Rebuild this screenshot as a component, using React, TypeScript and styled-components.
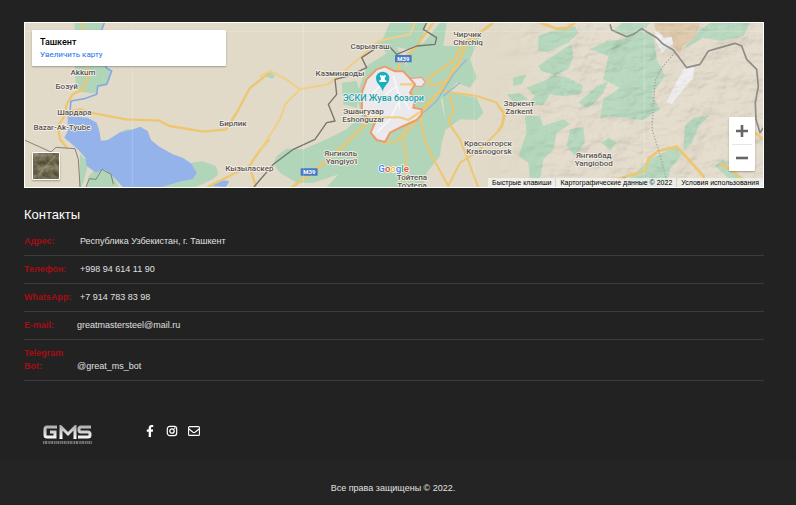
import React from "react";
import styled, { createGlobalStyle } from "styled-components";
import { FaFacebookF } from "react-icons/fa";

const GlobalStyle = createGlobalStyle`
  *, *::before, *::after { box-sizing: border-box; }
  html { background: #222222; }
  body {
    margin: 0;
    background: #222222;
    color: #e0e0e0;
    font: 9px/13px "Liberation Sans", Arial, sans-serif;
  }
`;

const Page = styled.div`
  min-height: 100vh;
  display: flex;
  flex-direction: column;
`;

const Main = styled.main`
  padding: 22px 32px 0 24px;
`;

const MapFrame = styled.section`
  position: relative;
  height: 166px;
  border: 1px solid #ffffff;
  overflow: hidden;
  background: #e2dac8;
  font-family: Roboto, "Liberation Sans", sans-serif;
`;

const MapCanvas = styled.svg`
  position: absolute;
  inset: 0;
  width: 100%;
  height: 100%;
`;

const PlaceCard = styled.div`
  position: absolute;
  top: 7px;
  left: 7px;
  width: 194px;
  padding: 6px 8px 5px;
  background: #ffffff;
  border-radius: 1px;
  box-shadow: 0 1px 2px rgba(0, 0, 0, 0.3);
`;

const PlaceName = styled.div`
  color: #000000;
  font-size: 9px;
  font-weight: 500;
  line-height: 13px;
`;

const PlaceLink = styled.a`
  display: block;
  color: #1a73e8;
  font-size: 8px;
  line-height: 12px;
  text-decoration: none;
`;

const Satellite = styled.button`
  position: absolute;
  left: 7px;
  bottom: 7px;
  width: 28px;
  height: 28px;
  padding: 0;
  border: 1px solid #ffffff;
  border-radius: 1px;
  overflow: hidden;
  box-shadow: 0 1px 2px rgba(0, 0, 0, 0.3);

  svg { display: block; width: 100%; height: 100%; }
`;

const ZoomPanel = styled.div`
  position: absolute;
  right: 8px;
  bottom: 16px;
  width: 26px;
  padding: 0 3px;
  background: #ffffff;
  border-radius: 1px;
  box-shadow: 0 1px 2px rgba(0, 0, 0, 0.3);
`;

const ZoomButton = styled.button`
  display: flex;
  align-items: center;
  justify-content: center;
  width: 100%;
  height: 27px;
  padding: 0;
  border: 0;
  background: none;

  & + & { border-top: 1px solid #e6e6e6; }
`;

const MapTerms = styled.div`
  position: absolute;
  right: 0;
  bottom: 0;
  display: flex;
  background: rgba(245, 245, 245, 0.7);
  color: #000000;
  font: 7px/9px "Liberation Sans", Arial, sans-serif;
  white-space: nowrap;
`;

const termText = `
  padding: 0 4px;
  color: inherit;
  font: inherit;
  text-decoration: none;
`;

const TermButton = styled.button`
  ${termText}
  border: 0;
  background: none;
`;

const TermLabel = styled.span`
  ${termText}
  border-left: 1px solid #d5d0c5;
`;

const TermLink = styled.a`
  ${termText}
  border-left: 1px solid #d5d0c5;
`;

const Heading = styled.h2`
  margin: 17px 0 8px;
  color: #ffffff;
  font: 400 13px/20px "Liberation Sans", Arial, sans-serif;
`;

const ContactList = styled.dl`
  margin: 0;
`;

const ContactRow = styled.div`
  display: grid;
  grid-template-columns: 53px 1fr;
  align-items: end;
  padding: 7px 0;
  border-bottom: 1px solid #3b3b3b;

  &:first-child { padding-top: 2px; }
`;

const ContactLabel = styled.dt`
  color: #a50d14;
  font-weight: 700;
`;

const ContactValue = styled.dd<{ $inset?: boolean }>`
  margin: 0;
  padding-left: ${(p) => (p.$inset ? "3px" : "0")};
`;

const FooterTop = styled.div`
  display: flex;
  align-items: flex-start;
  gap: 51px;
  padding: 44px 43px 14px;
`;

const LogoLink = styled.a`
  display: block;
  svg { display: block; }
`;

const Socials = styled.nav`
  display: flex;
  gap: 8px;
`;

const SocialLink = styled.a`
  display: flex;
  justify-content: center;
  width: 14px;
  color: #ffffff;
`;

const Copyright = styled.div`
  flex: 1;
  padding: 22px 10px 10px 0;
  background: #242424;
  text-align: center;
`;

type Point = [number, number, string];

const westGreens = [
  "M176 18H262L252 55 270 100 272 155 287 165 272 205 245 215 240 232 190 228 178 200Z",
  "M192 415 208 430 215 450 202 500 195 513H190Z",
  "M210 513 218 480 240 458 265 460 290 480 310 513Z",
  "M525 440 560 436 600 450 607 475 590 490 540 513H440L490 497 530 490 543 470Z",
  "M308 350 330 340 352 340 315 355Z",
];

const cityGreens = [
  "M390 18H500L480 95 440 100 410 92 380 110 350 85 370 65Z",
  "M440 110 480 90 500 70 540 20H560L550 90 600 90 640 60H660L630 130 650 185 630 215 590 200 550 245 500 270 480 180 440 150Z",
  "M545 225 650 245 670 290 650 312 600 310 560 340Z",
  "M320 150 410 92 440 150 480 180 500 250 540 240 560 330 545 380 540 420 500 470 490 513H200L240 470 190 455 200 400 270 330 305 300 290 240Z",
  "M245 200 290 195 300 230 290 275 250 265Z",
  "M50 420 80 398 130 400 200 370 280 330 320 350 300 430 250 470 160 500 110 500 60 470 40 445Z",
  "M15 180 30 165 45 182 35 188Z",
];

const mountainGreens = [
  "M115 60 160 45 225 30 235 50 205 80 145 108 115 105Z",
  "M115 150 150 125 215 83 220 125 205 160 165 178 125 165Z",
  "M80 215 130 195 165 178 205 185 250 210 240 235 190 240 150 235 130 268 85 265 105 240Z",
  "M270 100 320 75 370 70 420 45 460 55 470 130 495 180 470 215 455 235 480 280 430 312 330 300 300 310 310 250 360 215 310 190 325 120Z",
  "M235 260 290 210 325 195 310 230 280 265 260 275Z",
  "M40 185 80 175 65 205 40 210Z",
  "M20 235 60 232 85 250 40 258Z",
  "M75 300 120 300 130 330 190 310 210 325 170 350 160 400 130 430 120 490H90L85 440 55 420 80 350Z",
  "M210 340 250 332 255 380 225 420 200 390Z",
  "M305 380 325 365 350 380 330 402Z",
  "M550 100 590 50 630 20H750L730 60 660 75 610 65Z",
  "M555 330 580 305 630 298 600 325 575 380 550 405Z",
  "M385 490 450 430 530 390 550 410 510 460 500 513H380Z",
  "M645 450 670 430 690 460 740 490 700 500Z",
  "M365 20H450L420 55 380 62 340 45Z",
];

const westLabels: Point[] = [
  [201, 178, "Akkum"],
  [152, 218, "Бозуй"],
  [175, 298, "Шардара"],
  [138, 341, "Bazar-Ak-Tyube"],
  [651, 331, "Бирлик"],
  [700, 465, "Кызыласкер"],
];

const cityLabels: Point[] = [
  [330, 99, "Сарыагаш"],
  [622, 63, "Чирчик"],
  [624, 87, "Chirchiq"],
  [240, 181, "Казминводы"],
  [310, 293, "Эшангузар"],
  [310, 317, "Eshonguzar"],
  [242, 420, "Янгиюль"],
  [244, 443, "Yangiyo'l"],
  [684, 390, "Красногорск"],
  [687, 413, "Krasnogorsk"],
  [456, 493, "Тойтепа"],
  [456, 515, "To'ytepa"],
];

const eastLabels: Point[] = [
  [57, 270, "Заркент"],
  [57, 294, "Zarkent"],
  [281, 427, "Янгиабад"],
  [281, 450, "Yangiobod"],
];

const MapLabel = styled.text`
  fill: #555555;
  stroke: #f6f1e7;
  stroke-width: 5px;
  stroke-linejoin: round;
  paint-order: stroke;
  font: 500 24px Roboto, "Liberation Sans", sans-serif;
  text-anchor: middle;
`;

const MarketLabel = styled(MapLabel)`
  fill: #18a1b3;
  font-size: 27px;
`;

const RoadLabel = styled.text`
  fill: #ffffff;
  font: 700 18px Roboto, sans-serif;
  text-anchor: middle;
`;

const GoogleText = styled.text`
  font: 500 29px Roboto, sans-serif;
  stroke: #ffffff;
  stroke-width: 4px;
  paint-order: stroke;
  text-anchor: middle;
`;

const Labels = ({ items }: { items: Point[] }) => (
  <>
    {items.map(([x, y, text]) => (
      <MapLabel key={text} x={x} y={y}>{text}</MapLabel>
    ))}
  </>
);

const MapDrawing = () => (
  <MapCanvas viewBox="75 69 2214 492" preserveAspectRatio="xMidYMid slice" aria-label="Карта Ташкента">
    <defs>
      <filter id="relief" x="0" y="0" width="100%" height="100%">
        <feTurbulence type="fractalNoise" baseFrequency="0.012 0.02" numOctaves="4" seed="8" />
        <feDiffuseLighting surfaceScale="26" lightingColor="#ffffff">
          <feDistantLight azimuth="225" elevation="55" />
        </feDiffuseLighting>
      </filter>
      <linearGradient id="reliefFade">
        <stop offset="0" stopColor="#000" />
        <stop offset="0.3" stopColor="#fff" />
      </linearGradient>
      <mask id="reliefMask">
        <rect x="1450" y="60" width="850" height="510" fill="url(#reliefFade)" />
      </mask>
    </defs>
    <rect x="0" y="0" width="2400" height="600" fill="#e2dac8" />

    <g fill="#b0d5b8">
      <g transform="translate(48 48)">{westGreens.map((d) => <path key={d} d={d} />)}</g>
      <g transform="translate(780 48)">{cityGreens.map((d) => <path key={d} d={d} />)}</g>
      <g transform="translate(1500 48)">{mountainGreens.map((d) => <path key={d} d={d} />)}</g>
    </g>
    <g transform="translate(1500 48)">
      <path d="M460 20H600L585 65 550 90 540 115 500 70 470 50Z" fill="#dcc4a3" />
      <path d="M465 45 480 50 490 65 515 62 520 85 500 95 485 110 468 75Z" fill="#eeeeee" />
      <path d="M550 160 582 150 580 185 550 220 515 265 500 258 520 215Z" fill="#eeeeee" />
    </g>
    <g mask="url(#reliefMask)">
      <rect x="1450" y="60" width="850" height="510" filter="url(#relief)" opacity="0.12" />
    </g>

    <g transform="translate(48 48)" fill="none" strokeLinejoin="round">
      <path d="M155 300 215 305 242 320 250 345 255 374 275 372 310 350 352 340 372 332 395 345 405 372 430 392 470 415 500 425 525 442 543 470 530 490 490 497 440 513H320L290 480 265 460 240 470 212 450 208 425 185 400 165 382 145 365 155 345Z" fill="#94b3ea" />
      <path d="M575 510 610 492 640 495 630 513Z" fill="#94b3ea" />
      <path d="M265 20 252 55 270 100 270 155 287 165 272 205 245 210 242 235 205 248 165 255 162 285" stroke="#86a9e4" strokeWidth="5" />
      <path d="M200 20 210 100 215 180 200 220 170 235 152 265 145 300 126 330 132 370 155 398" stroke="#edc66f" strokeWidth="7" />
      <path d="M150 288 195 280 235 292 330 310 430 314 460 330 565 347 630 340 665 285 700 218 760 170" stroke="#edc66f" strokeWidth="7" />
      <path d="M760 370 730 405 700 450 640 480 575 513M700 450 720 513" stroke="#edc66f" strokeWidth="7" />
      <path d="M25 372 105 408 120 394 177 398 187 430 192 513M210 513 220 488 240 490 258 460 285 475 292 505" stroke="#858078" strokeWidth="3" />
    </g>

    <g transform="translate(780 48)" fill="none" strokeLinejoin="round">
      <path d="M0 182 30 165 75 188 120 220 205 205 300 125 355 75 450 55 465 20" stroke="#f0cf84" strokeWidth="6" />
      <path d="M120 220 75 265 60 310 0 405" stroke="#f0cf84" strokeWidth="6" />
      <path d="M95 515 175 455 250 390 310 330 350 300 440 305 480 290 540 225 595 145 620 80 700 20" stroke="#edc66f" strokeWidth="8" />
      <path d="M370 155 410 175 420 140 470 90 520 20M500 190 580 135 610 80 660 50M500 190 515 210 560 195 590 145" stroke="#edc66f" strokeWidth="7" />
      <path d="M545 225 650 240 710 260 735 300 720 340 650 410 600 440 565 510 515 420 490 360 480 290M570 240 580 280 565 320 600 370 625 435 655 515M440 330 430 380 440 430 430 513M370 380 410 375 460 325 520 250" stroke="#edc66f" strokeWidth="6" />
      <path d="M490 290 530 255 580 175 620 130M600 200 550 240" stroke="#92b8d9" strokeWidth="4" />
      <path d="M-20 515 40 445 100 400 165 370 200 320 225 315 205 265 230 235 225 190 265 180 320 155 305 125 350 95 385 88 410 115 470 90 525 85 530 65 490 40 500 20" stroke="#77736d" strokeWidth="4" />
      <path d="M450 188 485 184 496 198 485 212 460 210Z" fill="#e9e9ee" stroke="#f1a17f" strokeWidth="4" />
      <path d="M305 290 307 225 320 190 350 160 375 152 405 166 430 166 450 188 465 205 450 230 465 250 460 275 485 280 485 295 470 312 430 330 390 350 375 378 350 372 332 350 345 320Z" fill="#e9e9ee" stroke="#f09a68" strokeWidth="6" />
      <path d="M330 240 380 190M345 260 410 210 420 280M400 180 415 230 450 280M350 350 390 310 415 260" stroke="#fafafa" strokeWidth="4" />
      <path d="M320 304 420 304 445 312 480 288M420 205 460 205" stroke="#f0cf84" strokeWidth="7" />
      <rect x="405" y="117" width="50" height="22" rx="2" fill="#4779c4" />
      <rect x="122" y="457" width="51" height="22" rx="2" fill="#4779c4" />
      <RoadLabel x="430" y="135">M39</RoadLabel>
      <RoadLabel x="148" y="475">M39</RoadLabel>
    </g>

    <g transform="translate(1500 48)" fill="none" strokeLinejoin="round">
      <path d="M120 20 170 38 205 35 225 20M-5 270 12 290 8 325-5 345M350 490 435 465 445 430 475 405 530 392 570 435 610 480 615 513M660 445 700 465 730 500M765 350 790 370" stroke="#edc66f" strokeWidth="8" />
      <path d="M330 25 335 42 380 62 400 55 425 38 470 65 490 85 520 102 545 135 560 155 600 145 625 105 660 95 705 82 725 90 740 130 770 160 775 210 766 260 768 310 780 350 790 335" stroke="#8f8b86" strokeWidth="5" />
      <path d="M525 110 485 155 465 195 460 270 456 340 475 400 490 455 505 513" stroke="#aaa59c" strokeWidth="4" strokeDasharray="4 5" />
      <path d="M355 490 375 482 380 490" fill="#8caee3" />
    </g>
    <path d="M397 66V564M910 66V564M1422 66V564M1933 66V564M72 94H2292" stroke="#ffffff" strokeOpacity="0.3" strokeWidth="2" />

    <g transform="translate(48 48)"><Labels items={westLabels} /></g>
    <g transform="translate(780 48)">
      <Labels items={cityLabels} />
      <MarketLabel x="370" y="255">ЭСКИ Жува бозори</MarketLabel>
      <path d="M368 226C364 209 348 203 348 187A20 20 0 0 1 388 187C388 203 372 209 368 226Z" fill="#18afc1" />
      <path d="M360 177H364V180H367V177H370V180H373V177H377V184H374L375 193H379V198H358V193H362L363 184H360Z" fill="#ffffff" />
      <GoogleText x="401" y="468">
        <tspan fill="#4285f4">G</tspan><tspan fill="#ea4335">o</tspan><tspan fill="#fbbc05">o</tspan><tspan fill="#4285f4">g</tspan><tspan fill="#34a853">l</tspan><tspan fill="#ea4335">e</tspan>
      </GoogleText>
    </g>
    <g transform="translate(1500 48)"><Labels items={eastLabels} /></g>
  </MapCanvas>
);

const SatelliteDrawing = () => (
  <svg viewBox="0 0 26 26" aria-hidden="true">
    <filter id="ground" x="0" y="0" width="100%" height="100%" colorInterpolationFilters="sRGB">
      <feTurbulence type="fractalNoise" baseFrequency="0.16" numOctaves="4" seed="5" />
      <feColorMatrix values="0.4 0 0 0 0.24  0.4 0 0 0 0.22  0.4 0 0 0 0.12  0 0 0 0 1" />
    </filter>
    <rect width="26" height="26" filter="url(#ground)" />
    <path d="M5 23 10 16 13 14 17 8 23 2" fill="none" stroke="#a9a998" strokeOpacity="0.5" />
  </svg>
);

const Logo = () => (
  <svg width="49" height="21" viewBox="0 0 49 21" role="img" aria-label="GMS Great Master Steel">
    <defs>
      <linearGradient id="steel" x1="0" y1="0" x2="0" y2="14" gradientUnits="userSpaceOnUse">
        <stop offset="0" stopColor="#a9a9a9" />
        <stop offset="0.5" stopColor="#d2d2d2" />
        <stop offset="1" stopColor="#ffffff" />
      </linearGradient>
    </defs>
    <g fill="none" stroke="url(#steel)" strokeWidth="3">
      <path d="M14 2H4Q2 2 2 4V10Q2 12 4 12H12V7H7" />
      <path d="M18 14V2L25 9L32 2V14" />
      <path d="M48 2H38Q36 2 36 4V5Q36 7 38 7H45Q47 7 47 9V10Q47 12 45 12H35" />
    </g>
    <path d="M0 17.5H49" stroke="#777777" strokeWidth="3" strokeDasharray="1.4 .6 2 .7 1 .5" />
  </svg>
);

const InstagramIcon = () => (
  <svg width="12" height="12" viewBox="0 0 12 12" fill="none" stroke="currentColor" aria-hidden="true">
    <rect x="1.3" y="1.3" width="9.4" height="9.4" rx="2.6" strokeWidth="1.2" />
    <circle cx="6" cy="6" r="2.2" strokeWidth="1.3" />
    <circle cx="8.7" cy="3.3" r=".7" fill="currentColor" stroke="none" />
  </svg>
);

const EnvelopeIcon = () => (
  <svg width="12" height="12" viewBox="0 0 12 12" fill="none" stroke="currentColor" aria-hidden="true">
    <rect x=".6" y="1.6" width="10.8" height="8.8" rx="1" strokeWidth="1.1" />
    <path d="M1 4 5 7.2Q6 7.9 7 7.2L11 4" strokeWidth="1.2" />
  </svg>
);

const contacts = [
  { label: "Адрес:", value: "Республика Узбекистан, г. Ташкент", inset: true },
  { label: "Телефон:", value: "+998 94 614 11 90", inset: true },
  { label: "WhatsApp:", value: "+7 914 783 83 98", inset: true },
  { label: "E-mail:", value: "greatmastersteel@mail.ru" },
  { label: "Telegram Bot:", value: "@great_ms_bot" },
];

export default function App() {
  return (
    <Page>
      <GlobalStyle />
      <Main>
        <MapFrame>
          <MapDrawing />
          <PlaceCard>
            <PlaceName>Ташкент</PlaceName>
            <PlaceLink href="#map">Увеличить карту</PlaceLink>
          </PlaceCard>
          <Satellite type="button" aria-label="Спутник"><SatelliteDrawing /></Satellite>
          <ZoomPanel>
            <ZoomButton type="button" aria-label="Увеличить">
              <svg width="12" height="12" viewBox="0 0 12 12"><path d="M0 6H12M6 0V12" stroke="#666666" strokeWidth="2.6" /></svg>
            </ZoomButton>
            <ZoomButton type="button" aria-label="Уменьшить">
              <svg width="12" height="12" viewBox="0 0 12 12"><path d="M0 6H12" stroke="#666666" strokeWidth="2.6" /></svg>
            </ZoomButton>
          </ZoomPanel>
          <MapTerms>
            <TermButton type="button">Быстрые клавиши</TermButton>
            <TermLabel>Картографические данные © 2022</TermLabel>
            <TermLink href="#terms">Условия использования</TermLink>
          </MapTerms>
        </MapFrame>
        <Heading>Контакты</Heading>
        <ContactList>
          {contacts.map((c) => (
            <ContactRow key={c.label}>
              <ContactLabel>{c.label}</ContactLabel>
              <ContactValue $inset={c.inset}>{c.value}</ContactValue>
            </ContactRow>
          ))}
        </ContactList>
      </Main>
      <FooterTop>
        <LogoLink href="#home"><Logo /></LogoLink>
        <Socials>
          <SocialLink href="#facebook" aria-label="Facebook"><FaFacebookF size={12} /></SocialLink>
          <SocialLink href="#instagram" aria-label="Instagram"><InstagramIcon /></SocialLink>
          <SocialLink href="#mail" aria-label="E-mail"><EnvelopeIcon /></SocialLink>
        </Socials>
      </FooterTop>
      <Copyright>Все права защищены © 2022.</Copyright>
    </Page>
  );
}
